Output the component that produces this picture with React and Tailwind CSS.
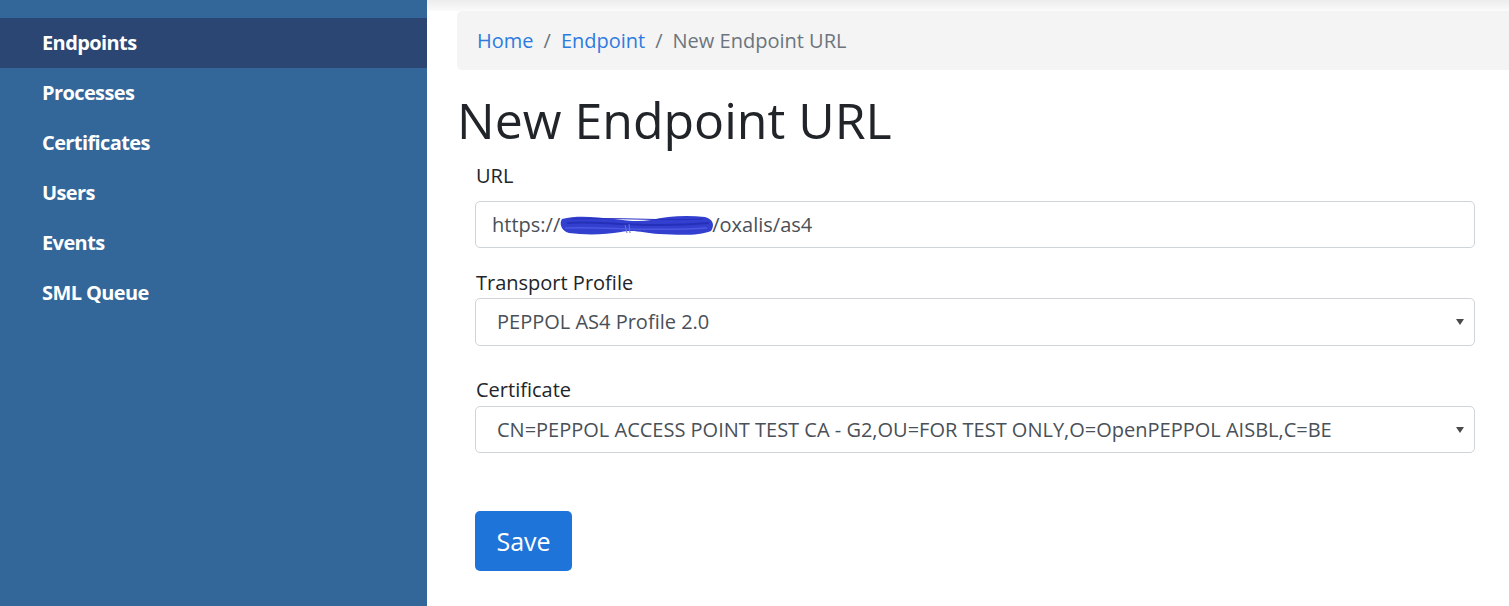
import React from "react";

const font = { fontFamily: '"Open Sans", "Noto Sans", sans-serif' };

function Arrow() {
  return (
    <svg width="8" height="6" viewBox="0 0 8 6" className="absolute right-[10px] top-1/2 -translate-y-1/2">
      <path d="M0 0 L8 0 L4 6 Z" fill="#4a4a4a" />
    </svg>
  );
}

function Scribble() {
  return (
    <svg width="156" height="28" viewBox="0 0 156 28" className="inline-block align-middle -ml-[1px] -mr-[3px] -my-[4px]">
      <path
        d="M3 8 C18 4, 36 6, 55 8 C70 10, 80 11, 92 9 C108 5, 128 4, 146 6 C154 8, 156 14, 152 20 C140 25, 120 24, 100 23 C85 22, 75 18, 62 21 C45 24, 25 24, 10 22 C2 20, 0 12, 3 8 Z"
        fill="#3340cf"
      />
      <path d="M8 12 C40 9, 80 18, 150 12" stroke="#2530b8" strokeWidth="2" fill="none" />
      <path d="M6 17 C40 15, 90 21, 148 17" stroke="#4c58e2" strokeWidth="1.5" fill="none" />
      <path d="M12 8 C50 6, 100 10, 144 8" stroke="#2630bd" strokeWidth="1.2" fill="none" />
      <path d="M66 14 L68 22 M70 13 L71 22" stroke="#6b75d8" strokeWidth="1" />
    </svg>
  );
}

export default function App() {
  const items = ["Endpoints", "Processes", "Certificates", "Users", "Events", "SML Queue"];
  return (
    <div className="flex h-[606px] w-[1509px] overflow-hidden bg-white" style={font}>
      <aside className="w-[427px] shrink-0 bg-[#336699] pt-[18px]">
        {items.map((it, i) => (
          <div
            key={it}
            className={`h-[50px] flex items-center pl-[42px] text-white text-[20px] font-bold tracking-[-0.6px] ${
              i === 0 ? "bg-[#2b4673]" : ""
            }`}
          >
            {it}
          </div>
        ))}
      </aside>
      <main className="flex-1 min-w-0 flex flex-col">
        <div className="h-[11px] bg-gradient-to-b from-[#ececec] to-[#fbfbfb]" />
        <div className="pl-[30px]">
          <nav className="h-[59px] bg-[#f4f4f4] rounded-l-[5px] flex items-center pl-[20px] text-[20px] text-[#6c757d]">
            <span className="text-[#2e7be0]">Home</span>
            <span className="px-[10px]">/</span>
            <span className="text-[#2e7be0]">Endpoint</span>
            <span className="px-[10px]">/</span>
            <span>New Endpoint URL</span>
          </nav>
          <h1 className="mt-[20px] text-[50px] leading-[60px] text-[#212529] font-normal">New Endpoint URL</h1>
          <div className="pl-[18px] pr-[34px] text-[20px] text-[#212529]">
            <div className="mt-[11px] h-[30px] leading-[30px] pl-[1px]">URL</div>
            <div className="mt-[10px] h-[47px] border border-[#ced4da] rounded-[5px] flex items-center pl-[16px] text-[#495057]">
              <span>https://</span>
              <Scribble />
              <span>/oxalis/as4</span>
            </div>
            <div className="mt-[20px] h-[30px] leading-[30px] pl-[1px]">Transport Profile</div>
            <div className="relative h-[48px] border border-[#ced4da] rounded-[5px] flex items-center pl-[21px] text-[#495057]">
              PEPPOL AS4 Profile 2.0
              <Arrow />
            </div>
            <div className="mt-[29px] h-[30px] leading-[30px] pl-[1px]">Certificate</div>
            <div className="mt-[1px] relative h-[47px] border border-[#ced4da] rounded-[5px] flex items-center pl-[21px] text-[#495057]">
              CN=PEPPOL ACCESS POINT TEST CA - G2,OU=FOR TEST ONLY,O=OpenPEPPOL AISBL,C=BE
              <Arrow />
            </div>
            <button className="mt-[58px] h-[60px] w-[97px] rounded-[5px] bg-[#1e74d9] text-white text-[25px] leading-none">
              Save
            </button>
          </div>
        </div>
      </main>
    </div>
  );
}
